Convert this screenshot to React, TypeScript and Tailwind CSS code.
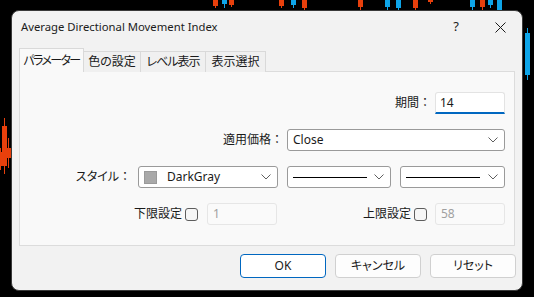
import React from "react";

const font = { fontFamily: '"Noto Sans", "Noto Sans CJK JP", sans-serif' };

const Chevron = () => (
  <svg width="10" height="6" viewBox="0 0 10 6" className="shrink-0">
    <path d="M0.5 0.5 L5 5 L9.5 0.5" fill="none" stroke="#5f5f5f" strokeWidth="1" />
  </svg>
);

const Select = ({ children, className }: { children: React.ReactNode; className: string }) => (
  <div
    className={`h-[22px] bg-white border border-[#9a9a9a] rounded-[3px] flex items-center pl-[5px] pr-[6px] gap-1 ${className}`}
  >
    <div className="flex-1 flex items-center min-w-0">{children}</div>
    <Chevron />
  </div>
);

const LineSel = ({ className }: { className: string }) => (
  <Select className={className}>
    <div className="h-px bg-black w-[74px]" />
  </Select>
);

const Check = () => (
  <div className="w-[13px] h-[13px] border border-[#5d5d5d] rounded-[3px] bg-[#f6f6f6]" />
);

// label text followed by a full-width colon, kept at normal width
const Label = ({ text }: { text: string }) => (
  <span className="flex items-center">
    <span>{text}</span>
    <span className="[font-feature-settings:normal]">：</span>
  </span>
);

const Candle = ({ x, top, body, wick, color }: { x: number; top: number; body: number; wick: number; color: string }) => (
  <div className="absolute flex flex-col items-center" style={{ left: x, top }}>
    <div className="w-px" style={{ height: wick, background: color }} />
    <div className="w-[5px]" style={{ height: body, background: color }} />
    <div className="w-px" style={{ height: wick, background: color }} />
  </div>
);

export default function App() {
  const orange = "#e8400c";
  const blue = "#0ea5e9";
  return (
    <div
      className="w-[534px] h-[297px] bg-black relative overflow-hidden text-[12px] text-[#1a1a1a] [font-feature-settings:'palt']"
      style={font}
    >
      {/* chart fragments behind the dialog */}
      <Candle x={213} top={-4} body={8} wick={2} color={orange} />
      <Candle x={222} top={-6} body={6} wick={4} color={blue} />
      <Candle x={229} top={-3} body={6} wick={2} color={orange} />
      <Candle x={279} top={-5} body={9} wick={2} color={orange} />
      <Candle x={291} top={-6} body={8} wick={3} color={blue} />
      <Candle x={302} top={-6} body={8} wick={6} color={orange} />
      <Candle x={358} top={-5} body={9} wick={3} color={orange} />
      <Candle x={385} top={-6} body={10} wick={3} color={blue} />
      <Candle x={396} top={-3} body={8} wick={3} color={blue} />
      <Candle x={413} top={-6} body={11} wick={3} color={orange} />
      <Candle x={428} top={-4} body={4} wick={2} color={orange} />
      <Candle x={470} top={-6} body={10} wick={3} color={blue} />
      <Candle x={480} top={-6} body={10} wick={3} color={orange} />
      <Candle x={488} top={-6} body={8} wick={3} color={blue} />
      <Candle x={497} top={-4} body={10} wick={4} color={blue} />
      <Candle x={525} top={28} body={42} wick={5} color={blue} />
      <Candle x={2} top={118} body={40} wick={8} color={orange} />
      <Candle x={-2} top={148} body={14} wick={4} color={orange} />
      <Candle x={6} top={138} body={10} wick={10} color={orange} />

      {/* dialog */}
      <div className="absolute left-[11px] top-[10px] w-[512px] h-[281px] bg-[#f2f2f2] rounded-[8px] border border-[#3a3a3a] flex flex-col">
        <div className="h-[31px] flex items-center pl-[9px] pt-[1px] shrink-0">
          <span className="flex-1 text-[11.3px] text-[#1b1b1b]">Average Directional Movement Index</span>
          <span className="text-[13px] mr-[36px]">?</span>
          <svg width="11" height="11" viewBox="0 0 11 11" className="mr-[16px]">
            <path d="M0.5 0.5 L10.5 10.5 M10.5 0.5 L0.5 10.5" stroke="#1b1b1b" strokeWidth="1" />
          </svg>
        </div>

        <div className="px-[7px] flex flex-col">
          {/* tabs */}
          <div className="flex items-end h-[30px] relative z-10 -mb-px">
            <div className="w-[65px] h-[24px] bg-[#f9f9f9] border border-b-0 border-[#d9d9d9] flex items-center justify-center tracking-[-1.6px]">
              パラメーター
            </div>
            <div className="w-[57px] h-[21px] bg-[#f0f0f0] border border-l-0 border-b-0 border-[#d9d9d9] flex items-center justify-center">
              色の設定
            </div>
            <div className="w-[65px] h-[21px] bg-[#f0f0f0] border border-l-0 border-b-0 border-[#d9d9d9] flex items-center justify-center tracking-[-1px]">
              レベル表示
            </div>
            <div className="w-[60px] h-[21px] bg-[#f0f0f0] border border-l-0 border-b-0 border-[#d9d9d9] flex items-center justify-center">
              表示選択
            </div>
          </div>

          {/* panel */}
          <div className="h-[175px] bg-[#f9f9f9] border border-[#dcdcdc] pt-[20px] pr-[9px] flex flex-col items-end gap-[15px]">
            <div className="flex items-center gap-[4px]">
              <Label text="期間" />
              <div className="w-[70px] h-[22px] bg-white border border-[#e3e3e3] border-b-2 border-b-[#0067c0] rounded-t-[3px] flex items-center pl-[4px]">
                14
              </div>
            </div>
            <div className="flex items-center gap-[4px]">
              <Label text="適用価格" />
              <Select className="w-[218px]">Close</Select>
            </div>
            <div className="flex items-center gap-[9px]">
              <span className="mr-[-2px]"><Label text="スタイル" /></span>
              <Select className="w-[140px]">
                <div className="w-[13px] h-[13px] bg-[#a9a9a9] border border-[#9a9a9a] mr-[10px]" />
                DarkGray
              </Select>
              <LineSel className="w-[104px]" />
              <LineSel className="w-[105px]" />
            </div>
            <div className="flex items-center">
              <span>下限設定</span>
              <div className="ml-[3px]"><Check /></div>
              <div className="ml-[9px] w-[70px] h-[22px] border border-[#e6e6e6] bg-[#fafafa] rounded-[3px] flex items-center pl-[5px] text-[#a0a0a0]">
                1
              </div>
              <span className="ml-[86px]">上限設定</span>
              <div className="ml-[3px]"><Check /></div>
              <div className="ml-[8px] w-[70px] h-[22px] border border-[#e6e6e6] bg-[#fafafa] rounded-[3px] flex items-center pl-[5px] text-[#a0a0a0]">
                58
              </div>
            </div>
          </div>
        </div>

        {/* buttons */}
        <div className="flex justify-end gap-[9px] pr-[6px] pt-[8px]">
          <button className="w-[86px] h-[24px] bg-white border border-[#0067c0] rounded-[4px]">OK</button>
          <button className="w-[86px] h-[24px] bg-[#fdfdfd] border border-[#d0d0d0] rounded-[4px]">キャンセル</button>
          <button className="w-[86px] h-[24px] bg-[#fdfdfd] border border-[#d0d0d0] rounded-[4px]">リセット</button>
        </div>
      </div>
    </div>
  );
}
